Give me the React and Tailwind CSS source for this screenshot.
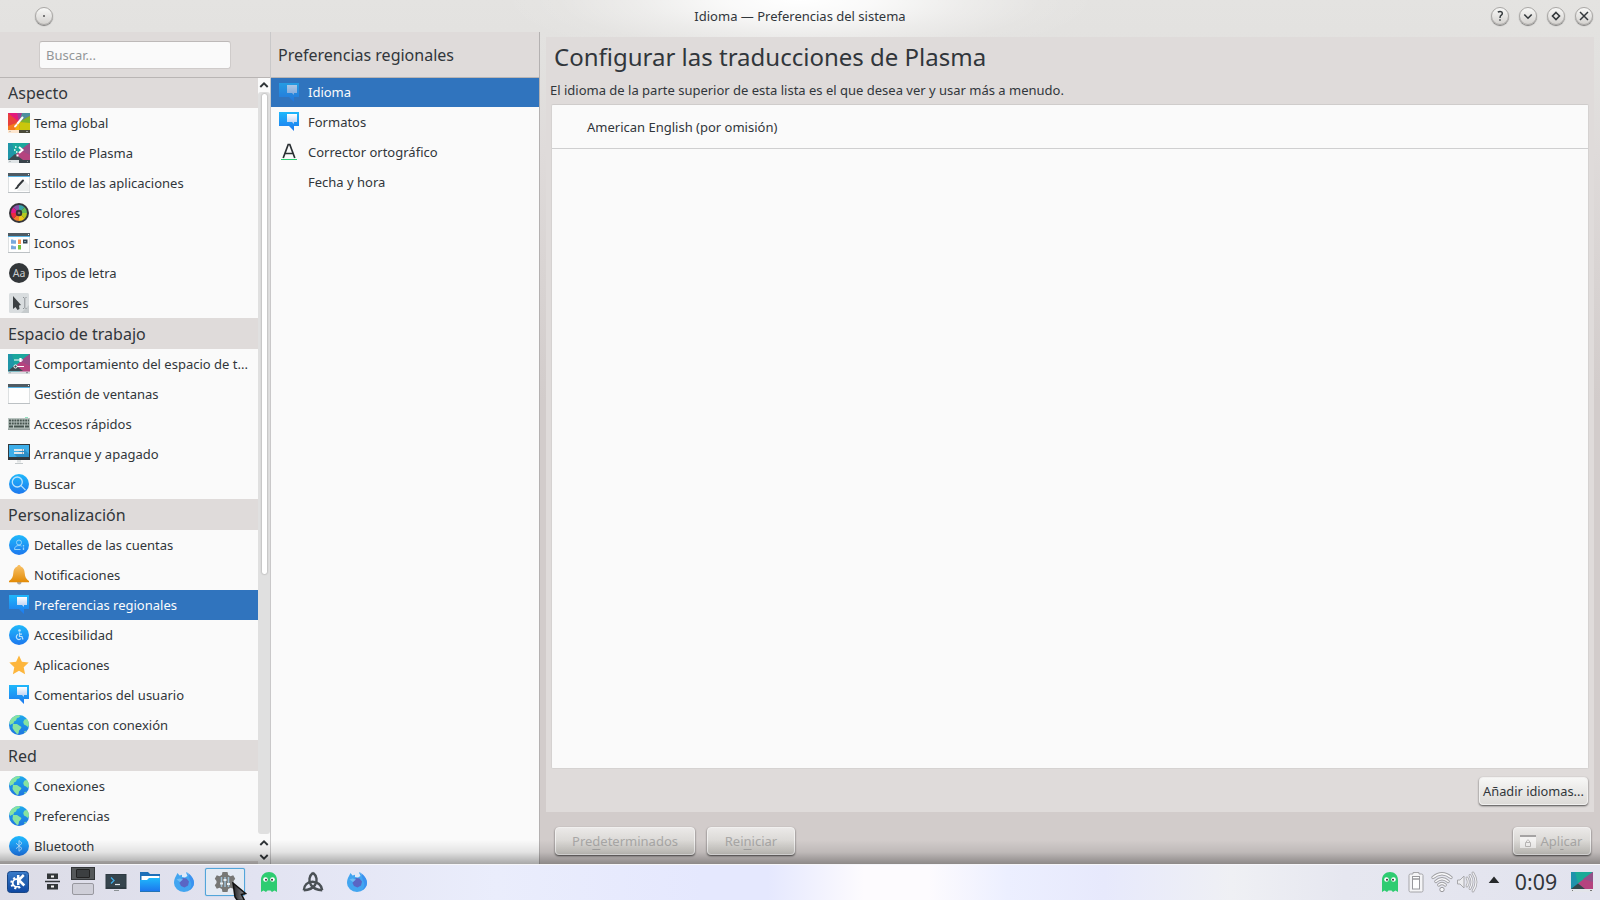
import React from "react";

// Small 22x22 icons
const Svg = ({ children, size = 22, className = "" }) => (
  <svg width={size} height={size} viewBox="0 0 22 22" className={`shrink-0 ${className}`}>
    {children}
  </svg>
);

const ThemeIcon = () => (
  <Svg>
    <rect x="0" y="1" width="22" height="20" fill="#e8413c" />
    <path d="M11 10 0 1h9z" fill="#e4187b" />
    <path d="M11 10 9 1h5z" fill="#a23a9a" />
    <path d="M11 10 14 1h8v3z" fill="#4d8fa0" />
    <path d="M11 10 22 4v8z" fill="#7fb52a" />
    <path d="M11 10 22 11v10H12z" fill="#c9c70c" />
    <path d="M11 10 12 20H5z" fill="#f3b30f" />
    <path d="M11 10 6 19H0v-5z" fill="#f47a1f" />
    <path d="M9.500 11.500 14.500 5.500" stroke="#fff" strokeWidth="2" strokeLinecap="round" />
    <path d="M7 14.500 8.500 13" stroke="#fff" strokeWidth="1.800" strokeLinecap="round" />
    <rect x="0" y="18" width="11" height="3" fill="#fde6cf" />
    <rect x="11" y="18" width="11" height="3" fill="#4a4a3a" />
    <path d="M1.500 19.500h1M18 19.500h2" stroke="#999" />
  </Svg>
);

const PlasmaBase = () => (
  <>
    <rect x="0" y="1" width="22" height="20" fill="#1f96a8" />
    <path d="M4 1h18L7 14z" fill="#1ba79d" />
    <path d="M22 1v20H14L7 13z" fill="#b5437f" />
    <path d="M22 1v12L12 8z" fill="#9a4c86" />
    <path d="M0 18 7 12 15 18z" fill="#3b4a50" />
  </>
);

const PlasmaStyleIcon = () => (
  <Svg>
    <PlasmaBase />
    <path d="M11 5l3.500 3-3.500 3M8.500 13.500h2" stroke="#fff" strokeWidth="2" fill="none" />
    <path d="M7 5h1.500M6 8h1.500M8 10h1.500" stroke="#fff" strokeWidth="1.500" />
    <rect x="0" y="18" width="11" height="3" fill="#dfe4e6" />
    <rect x="11" y="18" width="11" height="3" fill="#39444b" />
    <path d="M1.500 19.500h1M19 19.500h1" stroke="#8a9296" />
  </Svg>
);

const WorkspaceIcon = () => (
  <Svg>
    <PlasmaBase />
    <path d="M6 7h9M7 13.500h9" stroke="#fff" strokeWidth="1.200" />
    <path d="M12.500 5v4" stroke="#fff" strokeWidth="2.200" />
    <circle cx="7.500" cy="13.500" r="1.600" fill="#3b4a50" stroke="#fff" />
    <rect x="0" y="18.500" width="22" height="2.500" fill="#d9dde0" />
    <path d="M1.500 19.700h1M18 19.700h2" stroke="#7c8488" />
  </Svg>
);

const WindowFrame = ({ children }) => (
  <Svg>
    <rect x="0.500" y="3.500" width="21" height="17" fill="#fefefe" stroke="#dde0e1" />
    <path d="M0 20.500h22" stroke="#bcc1c4" />
    <rect x="0" y="1" width="22" height="3" fill="#4e5a62" />
    <rect x="0" y="4" width="22" height="1" fill="#5bb6e6" />
    <rect x="20" y="2" width="1" height="1" fill="#f5f5f5" />
    {children}
  </Svg>
);

const AppStyleIcon = () => (
  <WindowFrame>
    <path d="M9 19 16 8l5 5v6z" fill="#eef0f0" />
    <path d="M10 14 15 8.500" stroke="#34393c" strokeWidth="2" strokeLinecap="round" />
    <path d="M6.500 17.200c1-.4 1-2.700 3-3.200l1.200 1c-.6 1.500-2.200 2.300-4.200 2.200z" fill="#34393c" />
  </WindowFrame>
);

const IconsIcon = () => (
  <WindowFrame>
    <path d="M3 7.500h2l.7.700H8v3.500H3zM3 13.500h2l.7.700H8v3H3z" fill="#77a9dc" />
    <path d="M10 7.500h3V12h-3z" fill="#f79251" />
    <path d="M10 13h3v4.500h-3z" fill="#78c43c" />
    <rect x="15" y="7.500" width="4.500" height="4" fill="#33444f" />
    <path d="M16 9.500h2" stroke="#89b6cc" strokeWidth=".8" />
  </WindowFrame>
);

const WindowIcon = () => <WindowFrame />;

const ColorsIcon = () => (
  <Svg>
    <circle cx="11" cy="11" r="10" fill="#35353a" />
    <g>
      <path d="M11 11V3a8 8 0 0 1 5.660 2.340z" fill="#37a2a8" />
      <path d="M11 11l5.660-5.660A8 8 0 0 1 19 11z" fill="#64bb55" />
      <path d="M11 11h8a8 8 0 0 1-2.340 5.660z" fill="#b4c91f" />
      <path d="M11 11l5.660 5.660A8 8 0 0 1 11 19z" fill="#f0c419" />
      <path d="M11 11v8a8 8 0 0 1-5.660-2.340z" fill="#f3802a" />
      <path d="M11 11l-5.660 5.660A8 8 0 0 1 3 11z" fill="#ee2a40" />
      <path d="M11 11H3a8 8 0 0 1 2.340-5.660z" fill="#e01a88" />
      <path d="M11 11 5.340 5.340A8 8 0 0 1 11 3z" fill="#8253a8" />
    </g>
    <circle cx="11" cy="11" r="3.200" fill="#333337" />
    <circle cx="11" cy="11" r="1.300" fill="#777" />
  </Svg>
);

const FontsIcon = () => (
  <Svg>
    <circle cx="11" cy="11" r="10" fill="#33373a" />
    <text x="11" y="15" textAnchor="middle" fontSize="10.500" fill="#c9cccd" fontFamily="Noto Sans, sans-serif">
      Aa
    </text>
  </Svg>
);

const CursorsIcon = () => (
  <Svg>
    <rect x="1" y="1" width="20" height="20" rx="1.500" fill="#d9dddf" />
    <path d="M13 21 21 13v8z" fill="#c6cbcd" />
    <path d="M5 4v13l2.500-2 2 3 2-1-.5-3.500 2-.5z" fill="#3c4043" />
    <path d="M15 5.500h1.200M17.500 5.500h1M15 16.500h1.200M17.500 16.500h1M16.800 6v10" stroke="#8c9194" />
  </Svg>
);

const KeyboardIcon = () => (
  <Svg>
    <rect x="0" y="5" width="22" height="12" fill="#b9c4c0" />
    <rect x="0" y="15.500" width="22" height="1.500" fill="#96a19e" />
    <path d="M1 7.500h20M1 10.500h20" stroke="#46544f" strokeWidth="2" strokeDasharray="2 .7" />
    <path d="M1 13.500h4M6 13.500h10M17 13.500h4" stroke="#46544f" strokeWidth="2" />
    <path d="M17 4.500h3" stroke="#8fe0bf" />
  </Svg>
);

const BootIcon = () => (
  <Svg>
    <rect x="0" y="1" width="22" height="16" fill="#33393d" />
    <rect x="1" y="2" width="20" height="12" fill="#3daee9" />
    <path d="M6 11 16 6l5 5v3H9z" fill="#2d8fc7" />
    <path d="M6 6h10v2H6zM6 9h10v2H6z" fill="#dfe6ea" />
    <path d="M14 7h1M14 10h1" stroke="#667" />
    <path d="M9 17h4v2.500H9z" fill="#dfe2e3" />
    <path d="M7 20.500h8" stroke="#c4c9cb" />
  </Svg>
);

const Gradients = () => (
  <svg width="0" height="0" className="absolute">
    <defs>
      <linearGradient id="blue" x1="0" y1="0" x2="0" y2="1">
        <stop offset="0" stopColor="#1fb8fb" />
        <stop offset="1" stopColor="#1d78ee" />
      </linearGradient>
      <linearGradient id="gold" x1="0" y1="0" x2="0" y2="1">
        <stop offset="0" stopColor="#f9c36a" />
        <stop offset="1" stopColor="#e28a05" />
      </linearGradient>
      <linearGradient id="paper" x1="0" y1="0" x2="0" y2="1">
        <stop offset="0" stopColor="#fff" />
        <stop offset="1" stopColor="#b5cdf2" />
      </linearGradient>
      <linearGradient id="kblue" x1="0" y1="0" x2="0" y2="1">
        <stop offset="0" stopColor="#3a7cc9" />
        <stop offset="1" stopColor="#0d47a1" />
      </linearGradient>
      <linearGradient id="pointer" x1="0" y1="0" x2="1" y2="0">
        <stop offset="0" stopColor="#222226" />
        <stop offset="1" stopColor="#8d8d92" />
      </linearGradient>
    </defs>
  </svg>
);

const BlueCircle = ({ children }) => (
  <Svg>
    <circle cx="11" cy="11" r="10" fill="url(#blue)" />
    {children}
  </Svg>
);

const SearchIcon = () => (
  <BlueCircle>
    <circle cx="9.300" cy="9" r="5" fill="none" stroke="#b9e2fc" strokeWidth="1.300" />
    <path d="M13 12.600l4.500 4.500" stroke="#b9e2fc" strokeWidth="1.300" />
  </BlueCircle>
);

const AccountIcon = () => (
  <BlueCircle>
    <circle cx="11" cy="8.500" r="2.500" fill="none" stroke="#93d3fb" />
    <path d="M12.500 15.500h-6c0-2.500 1.500-4 4.500-4 1 0 2 .2 2.500.600" fill="none" stroke="#93d3fb" />
    <path d="M15.500 11v1.500M15.500 13.500v2.500" stroke="#93d3fb" strokeWidth="1.300" />
  </BlueCircle>
);

const AccessIcon = () => (
  <BlueCircle>
    <circle cx="11.500" cy="6.500" r="1.300" fill="#b9e2fc" />
    <path d="M11.500 8.500v4h2.500l1 3M11.500 10.200h2.500" fill="none" stroke="#b9e2fc" strokeWidth="1.200" />
    <path d="M10 10.500a2.600 2.600 0 1 0 3 4" fill="none" stroke="#b9e2fc" strokeWidth="1.200" />
  </BlueCircle>
);

const BluetoothIcon = () => (
  <BlueCircle>
    <path d="M8 8.200l6 5.300-3 2.800V5.500l3 2.800-6 5.400" fill="none" stroke="#a9d8fb" strokeWidth="1" />
  </BlueCircle>
);

const BellIcon = () => (
  <Svg>
    <path d="M9 18h4.500c0 1.700-1 2.500-2.200 2.500S9 19.700 9 18z" fill="#a7a7a7" />
    <path
      d="M11 1c-.9 0-1.600.6-1.800 1.500C6.500 3.500 5.500 6 5.300 9 5 13 4 15 1 17v1.200h20V17c-3-2-4-4-4.300-8-.2-3-1.200-5.500-3.900-6.500C12.600 1.600 11.900 1 11 1z"
      fill="url(#gold)"
    />
  </Svg>
);

const LocaleIcon = ({ dim }) => (
  <Svg className={dim ? "opacity-60" : ""}>
    <path d="M1 1h20v14h-5v5l-5-5H1z" fill="url(#blue)" />
    <path d="M9 3h10v8h-3v2l-2-2H9z" fill="url(#paper)" />
  </Svg>
);

const StarIcon = () => (
  <Svg>
    <path
      d="M11 1.500l2.900 6.300 6.800.8-5 4.700 1.400 6.900-6.100-3.500-6.100 3.500 1.400-6.900-5-4.700 6.800-.8z"
      fill="#fdb63d"
    />
  </Svg>
);

const GlobeIcon = () => (
  <Svg>
    <circle cx="11" cy="11" r="10" fill="url(#blue)" />
    <circle cx="11" cy="11" r="10" fill="#1f6fae" opacity=".2" />
    <path d="M1.500 8C3 4 6 1.500 10.500 1l2 .7-1.500 1.800-2 .5-1 2.500-2 1-.5 2-2 .5L2 11z" fill="#88e3a0" />
    <path d="M5 10l4 0 4.500 3-1 2-1.500 1.500-.5 3-1.500.5-3-3.500-1.500-2.500z" fill="#88e3a0" />
    <path d="M16.500 5.500l2.500-.5c1.300 1.600 2 3.500 2 6l-1 2-2-1.500-2-1-.8-2.500z" fill="#88e3a0" />
    <path d="M16 17.500l2.500-1-1.500 2.500z" fill="#88e3a0" />
  </Svg>
);

const SpellIcon = () => (
  <Svg>
    <path d="M5.200 17 10.200 3.500h1.600L16.800 17M7 12.500h8" fill="none" stroke="#2b3033" strokeWidth="1.700" />
    <path d="M3 18.500h16" stroke="#2ecc71" />
  </Svg>
);

// Taskbar icons
const KdeIcon = () => (
  <Svg>
    <rect x=".5" y=".5" width="21" height="21" rx="3" fill="url(#kblue)" stroke="#1a4684" />
    <circle cx="9.500" cy="12" r="5.200" fill="none" stroke="#fff" strokeWidth="2" strokeDasharray="2 2.080" />
    <circle cx="9.500" cy="12" r="3.800" fill="none" stroke="#fff" strokeWidth="1.800" />
    <path d="M9.500 3H19v12h-8z" fill="#2462b1" />
    <path d="M11.200 4v10M16.800 4l-5 5 5.500 5.500" fill="none" stroke="#fff" strokeWidth="2.500" />
  </Svg>
);

const DesktopsIcon = () => (
  <Svg>
    <path d="M6 2.500h11v5.500H6zM6 13h11v5.500H6z" fill="#333739" />
    <path d="M10 5.500h3M10 15.500h3" stroke="#f5f5f5" strokeWidth="2" />
    <path d="M4 10.500h15" stroke="#333739" strokeWidth="1.500" />
  </Svg>
);

const TerminalIcon = () => (
  <Svg>
    <rect x="0.500" y="3" width="21" height="15" fill="#2e3a42" />
    <rect x="1.500" y="4" width="19" height="12" fill="#35444d" />
    <path d="M6 6.500l3 3-3 3" fill="none" stroke="#3daee9" strokeWidth="1.300" />
    <path d="M10 13.500h5" stroke="#dfe6ea" strokeWidth="1.200" />
    <path d="M9 19.500h5" stroke="#8c9295" />
  </Svg>
);

const FolderIcon = () => (
  <Svg>
    <path d="M1 1h8l2 2h10v8H1z" fill="#1d6fb8" />
    <path d="M2.500 5h18v6h-18z" fill="#fff" />
    <path d="M1 9h7l2-2h11v13H1z" fill="url(#blue)" />
    <path d="M1 20.500h20" stroke="#2474b6" />
  </Svg>
);

const FirefoxIcon = () => (
  <Svg>
    <path
      d="M3 5l1.500-3 2 2.500 2-.5c1-.6 1.500-1 3.500-1.200L14 1l1.500 2.800C18 5 21 8 21 12a10 9 0 0 1-20 0c0-3 .8-5 2-7z"
      fill="#42a5f0"
    />
    <path d="M15 2c3.500 2.500 6 6 6 10 0 3-2 6-5 7.500 3-4 3-7 1-10z" fill="#3b92f0" />
    <path d="M8.500 8l2-1 3 .5 2.500 3-1 4-3.500 2-3.500-1.500L6.500 12z" fill="#5a66c4" />
    <path d="M3.500 8.500l3-1 3.500 1-3 2.500z" fill="#6fbdf5" />
    <path d="M9 3l4-1.500 1.500 3.500-2.500 1.500-3-.5z" fill="#dfe9f8" />
  </Svg>
);

const GearIcon = () => (
  <Svg>
    <path
      d="M8.500 1h5l.7 3 2.300 1.200 2.700-1 2 3.500-1.700 2.300v2l1.700 2.300-2 3.500-2.700-1-2.300 1.200-.7 3h-5l-.7-3-2.300-1.200-2.700 1-2-3.500L2.500 12v-2L.8 7.700l2-3.500 2.700 1L7.800 4z"
      fill="#777775"
    />
    <path d="M7.500 6v10M11 6v10M14.500 6v10" stroke="#9fbfd3" strokeWidth="1.500" />
    <path d="M6 12.500h3M9.500 9h3M13 13h3" stroke="#e8eef2" strokeWidth="1.800" />
  </Svg>
);

const GhostIcon = () => (
  <Svg>
    <path d="M3 21V9c0-5 3.500-8 8-8s8 3 8 8v12l-2.500-1.500L14 21l-1.500-1.500h-3L8 21l-2.500-1.500z" fill="#2ecc71" />
    <circle cx="7.500" cy="8.500" r="2.300" fill="#fff" />
    <circle cx="14.500" cy="8.500" r="2.300" fill="#fff" />
    <circle cx="8" cy="8.800" r="1" fill="#333" />
    <circle cx="14" cy="8.800" r="1" fill="#333" />
  </Svg>
);

const TriquetraIcon = () => (
  <Svg>
    <g fill="none" stroke="#4a5055" strokeWidth="2.400" strokeLinejoin="round">
      <path d="M11 1.800C7 5 6.300 10 9 14c2 3 6 5 11.200 5.200" />
      <path d="M11 1.800c4 3.200 4.700 8.200 2 12.200-2 3-6 5-11.200 5.200" />
      <path d="M1.800 19.200C2 14 5.500 10.800 10.500 10.700c5 0 9.200 3.300 9.700 8.500" />
    </g>
  </Svg>
);

const BatteryIcon = () => (
  <Svg>
    <path
      d="M8 3V1.500h6V3h2.500q1.500 0 1.500 1.500v15q0 1.500-1.500 1.500h-11Q4 21 4 19.500v-15Q4 3 5.500 3z"
      fill="#f4f4f6"
      stroke="#a4a4a8"
    />
    <rect x="7.500" y="5.500" width="7" height="12.500" fill="#fff" stroke="#98989c" />
    <path d="M8 8h6" stroke="#98989c" strokeWidth="1.500" />
  </Svg>
);

const WifiIcon = () => (
  <Svg>
    {["#a0a0a4", "#f8f8fa"].map((color, i) => (
      <g key={color} fill="none" stroke={color} strokeWidth={i ? 1.500 : 3.200} strokeLinecap="round">
        <path d="M2 6.500q9-7.500 18 0" />
        <path d="M4.800 10.500q6.200-5.500 12.400 0" />
        <path d="M7.700 14q3.300-3 6.600 0" />
      </g>
    ))}
    <circle cx="11" cy="18.500" r="2.200" fill="#f8f8fa" stroke="#98989c" />
  </Svg>
);

const VolumeIcon = () => (
  <Svg>
    <path d="M1.500 9H4l4-4v12l-4-4H1.500z" fill="#ededf0" stroke="#a8a8ac" />
    {["#a8a8ac", "#f3f3f6"].map((color, i) => (
      <g key={color} fill="none" stroke={color} strokeWidth={i ? 1.200 : 2.800} strokeLinecap="round">
        <path d="M11 7q2.500 4 0 8" />
        <path d="M14 4.500q4 6.500 0 13" />
        <path d="M17 2q6 9 0 18" />
      </g>
    ))}
  </Svg>
);

const WallpaperIcon = () => (
  <Svg>
    <rect x="0" y="1" width="22" height="20" fill="#1f93ac" />
    <path d="M4 1h18L7 13z" fill="#1bab97" />
    <path d="M22 1v18h-8L7 12.500z" fill="#b5437f" />
    <path d="M22 1v10L12 8z" fill="#94518a" />
    <path d="M0 18 7 12.500 14 18z" fill="#34464b" />
    <rect x="0" y="18" width="22" height="3" fill="#e3e5ea" />
    <path d="M1 19.500h1M19 19.500h2" stroke="#777" />
  </Svg>
);

const sections = [
  {
    title: "Aspecto",
    items: [
      { label: "Tema global", icon: ThemeIcon },
      { label: "Estilo de Plasma", icon: PlasmaStyleIcon },
      { label: "Estilo de las aplicaciones", icon: AppStyleIcon },
      { label: "Colores", icon: ColorsIcon },
      { label: "Iconos", icon: IconsIcon },
      { label: "Tipos de letra", icon: FontsIcon },
      { label: "Cursores", icon: CursorsIcon },
    ],
  },
  {
    title: "Espacio de trabajo",
    items: [
      { label: "Comportamiento del espacio de t...", icon: WorkspaceIcon },
      { label: "Gestión de ventanas", icon: WindowIcon },
      { label: "Accesos rápidos", icon: KeyboardIcon },
      { label: "Arranque y apagado", icon: BootIcon },
      { label: "Buscar", icon: SearchIcon },
    ],
  },
  {
    title: "Personalización",
    items: [
      { label: "Detalles de las cuentas", icon: AccountIcon },
      { label: "Notificaciones", icon: BellIcon },
      { label: "Preferencias regionales", icon: LocaleIcon, active: true },
      { label: "Accesibilidad", icon: AccessIcon },
      { label: "Aplicaciones", icon: StarIcon },
      { label: "Comentarios del usuario", icon: LocaleIcon },
      { label: "Cuentas con conexión", icon: GlobeIcon },
    ],
  },
  {
    title: "Red",
    items: [
      { label: "Conexiones", icon: GlobeIcon },
      { label: "Preferencias", icon: GlobeIcon },
      { label: "Bluetooth", icon: BluetoothIcon },
    ],
  },
];

const Chevron = ({ down }) => (
  <svg width="10" height="8" viewBox="0 0 10 8" className={down ? "rotate-180" : ""}>
    <path d="M1.300 6 5 2.300 8.700 6" fill="none" stroke="#2f3437" strokeWidth="1.900" />
  </svg>
);

const RoundButton = ({ children }) => (
  <div className="flex h-[18px] w-[18px] items-center justify-center rounded-full border border-[#a9a7a5] bg-gradient-to-b from-[#f8f8f7] to-[#d5d3d0] shadow-[0_1px_1px_rgba(0,0,0,0.45)]">
    {children}
  </div>
);

const TitleBar = () => (
  <div className="relative flex h-8 shrink-0 items-center px-[7px]">
    <div className="ml-7">
      <RoundButton>
        <span className="h-[2px] w-[2px] bg-[#777]" />
      </RoundButton>
    </div>
    <h1 className="flex-1 pl-[56px] pt-px text-center">Idioma — Preferencias del sistema</h1>
    <div className="flex gap-[10px]">
      <RoundButton>
        <svg width="12" height="12" viewBox="0 0 12 12" fill="none" stroke="#33383b" strokeWidth="1.400">
          <path d="M3.800 2.200Q6 .8 7.800 2q1.200 1.700-.5 3.200Q6 6 6 8M6 9.300v1.400" />
        </svg>
      </RoundButton>
      <RoundButton>
        <svg width="12" height="12" viewBox="0 0 12 12" fill="none" stroke="#33383b" strokeWidth="1.600">
          <path d="M2.300 4.500 6 8.200l3.700-3.700" />
        </svg>
      </RoundButton>
      <RoundButton>
        <svg width="12" height="12" viewBox="0 0 12 12" fill="none" stroke="#33383b" strokeWidth="1.600">
          <path d="M6 2.500 9.500 6 6 9.500 2.500 6z" />
        </svg>
      </RoundButton>
      <RoundButton>
        <svg width="12" height="12" viewBox="0 0 12 12" fill="none" stroke="#33383b" strokeWidth="1.500">
          <path d="M2 2l8 8M10 2l-8 8" />
        </svg>
      </RoundButton>
    </div>
  </div>
);

const Sidebar = () => (
  <div className="flex w-[271px] shrink-0 flex-col border-r border-[#c9c8c9] bg-[#dfdbda]">
    <div className="h-[46px] shrink-0 border-b border-[#b9b5b4] pl-[39px] pt-[9px]">
      <input
        type="text"
        placeholder="Buscar..."
        className="h-7 w-48 rounded-[3px] border border-[#cfcbca] border-t-[#bdb9b8] bg-[#fafafa] px-1.5 placeholder:text-[#939698]"
      />
    </div>
    <div className="flex min-h-0 flex-1">
      <div className="mb-[3px] w-[258px] shrink-0 overflow-hidden bg-[#fafafa]">
        {sections.map((section, i) => (
          <div key={section.title}>
            <div
              className={`flex items-center bg-[#dfdbda] pl-2 text-base leading-none ${
                i === 0 ? "h-[30px]" : "h-[31px] pt-px"
              }`}
            >
              {section.title}
            </div>
            {section.items.map(({ label, icon: Icon, active }) => (
              <div
                key={label}
                className={`flex h-[30px] items-center gap-1 pl-2 ${active ? "bg-[#3074be] text-[#fcfcfc]" : ""}`}
              >
                <Icon />
                <span className="whitespace-nowrap pt-px">{label}</span>
              </div>
            ))}
          </div>
        ))}
      </div>
      {/* Scrollbar */}
      <div className="flex w-3 flex-col items-center bg-[#fafafa]">
        <div className="flex h-[14px] shrink-0 items-center pb-px">
          <Chevron />
        </div>
        <div className="w-full flex-1 rounded-[3px] bg-[#e0e0e0] pt-[2px]">
          <div className="mx-auto h-[480px] w-[5px] rounded-[2px] bg-white shadow-[0_0_2px_rgba(0,0,0,0.4)]" />
        </div>
        <div className="flex h-[30px] shrink-0 flex-col items-center gap-[6px] pt-[5px]">
          <Chevron />
          <Chevron down />
        </div>
      </div>
    </div>
  </div>
);

const subItems = [
  { label: "Idioma", icon: LocaleIcon, active: true },
  { label: "Formatos", icon: LocaleIcon },
  { label: "Corrector ortográfico", icon: SpellIcon },
  { label: "Fecha y hora" },
];

const SubCategories = () => (
  <div className="flex w-[269px] shrink-0 flex-col border-r border-[#b4b1b1] bg-[#fafafa]">
    <div className="flex h-[46px] shrink-0 items-center border-b border-[#b9b5b4] bg-[#dfdbda] pl-[7px] text-base leading-none">
      Preferencias regionales
    </div>
    {subItems.map(({ label, icon: Icon, active }, i) => (
      <div
        key={label}
        className={`flex items-center pl-[7px] ${i === 0 ? "h-[29px]" : "h-[30px]"} ${
          active ? "bg-[#3074be] text-[#fcfcfc]" : ""
        }`}
      >
        <div className="mr-2 w-[22px]">{Icon && <Icon dim={active} />}</div>
        <span className={i === 0 ? "" : "pt-px"}>{label}</span>
      </div>
    ))}
  </div>
);

const Button = ({ className, children }) => (
  <button
    className={`flex h-7 items-center justify-center rounded-[4px] border border-[#f1f0ef] bg-gradient-to-b pt-px shadow-[0_1px_2px_rgba(0,0,0,0.65)] ${className}`}
  >
    {children}
  </button>
);

const Content = () => (
  <div className="flex min-w-0 flex-1 flex-col pl-1.5 pr-1.5 pt-[5px]">
    <div className="flex h-[775px] shrink-0 flex-col bg-[#dfdbda] pl-1 pr-[5px]">
      <h2 className="ml-1 flex h-10 items-center text-[24px]">Configurar las traducciones de Plasma</h2>
      <p className="flex h-[27px] items-center pb-px">
        El idioma de la parte superior de esta lista es el que desea ver y usar más a menudo.
      </p>
      <div className="ml-px h-[665px] rounded-[2px] border border-[#d5d2d1] border-t-[#cfcccb] bg-[#fafafa]">
        <div className="flex h-11 items-center border-b border-[#cfcfd0] pl-[35px] pt-0.5">
          American English (por omisión)
        </div>
      </div>
      <div className="mr-px mt-2 flex justify-end">
        <Button className="w-[109px] shrink-0 whitespace-nowrap from-[#f7f7f6] to-[#dddbd8] text-[12.800px]">
          Añadir idiomas...
        </Button>
      </div>
    </div>
    <div className="mt-[15px] flex gap-3 pl-[9px] pr-[3px] text-[#a9a8a7]">
      <Button className="w-[140px] from-[#ebe9e8] to-[#cbc9c4]">
        Pre<u className="underline-offset-[3px]">d</u>eterminados
      </Button>
      <Button className="w-[88px] from-[#ebe9e8] to-[#cbc9c4]">
        Rei<u className="underline-offset-[3px]">n</u>iciar
      </Button>
      <Button className="ml-auto w-[78px] gap-[5px] from-[#ebe9e8] to-[#cbc9c4] pr-0.5">
        <svg width="16" height="16" viewBox="0 0 16 16">
          <rect x="0" y="1" width="16" height="13" fill="#f3f2f1" />
          <rect x="0" y="1" width="16" height="2" fill="#a5a3a3" />
          <path d="M5.500 8.500h5v4h-5zM6.500 8.500V7q1.500-2.500 3 0v1.500" fill="none" stroke="#bbb9b8" />
        </svg>
        <span>
          Apl<u className="underline-offset-[3px]">i</u>car
        </span>
      </Button>
    </div>
  </div>
);

const Slot = ({ className, children }) => (
  <div className={`flex h-full shrink-0 items-center justify-center ${className}`}>{children}</div>
);

const Taskbar = () => (
  <div className="relative flex h-9 shrink-0 items-center border-t border-[#f6f6fa] bg-[linear-gradient(90deg,#dcdce6_0%,#e2e3f1_16%,#eaedfc_31%,#e5e8fe_44%,#e5e8fe_48%,#fdfbfe_54%,#fdfbfe_58%,#ecefff_63%,#e7e9fc_69%,#eff0f4_77%,#e6e7f0_84%,#e2e3ee_100%)] pb-px">
    <Slot className="w-9"><KdeIcon /></Slot>
    <Slot className="w-8"><DesktopsIcon /></Slot>
    <Slot className="w-[30px] flex-col gap-[3px] pb-[3px]">
      <div className="flex h-[13px] w-6 items-center justify-center border border-[#333638] bg-[#55585a]">
        <div className="h-[9px] w-[14px] rounded-[1px] border border-[#222] bg-[#3c3f41]" />
      </div>
      <div className="h-3 w-[22px] rounded-[2px] border border-[#98989f] bg-[#cfcfd8]" />
    </Slot>
    <Slot className="w-[36px]"><TerminalIcon /></Slot>
    <Slot className="w-[31px]"><FolderIcon /></Slot>
    <Slot className="w-[38px]"><FirefoxIcon /></Slot>
    <Slot className="w-[43px]">
      <div className="flex h-[28px] w-10 items-center justify-center rounded-[2px] border border-[#52a5da] bg-[#e4eaf3] shadow-[0_0_1px_#52a5da]">
        <GearIcon />
      </div>
    </Slot>
    <Slot className="w-[45px]"><GhostIcon /></Slot>
    <Slot className="w-[43px]"><TriquetraIcon /></Slot>
    <Slot className="w-[45px]"><FirefoxIcon /></Slot>
    <div className="flex-1" />
    <Slot className="w-[25px]"><GhostIcon /></Slot>
    <Slot className="w-[27px]"><BatteryIcon /></Slot>
    <Slot className="w-[25px]"><WifiIcon /></Slot>
    <Slot className="w-[26px]"><VolumeIcon /></Slot>
    <Slot className="w-[27px] pb-1">
      <svg width="12" height="8" viewBox="0 0 12 8">
        <path d="M6 .5 11.300 7H.7z" fill="#26292b" />
      </svg>
    </Slot>
    <Slot className="w-[57px] pl-px text-[21.300px]">0:09</Slot>
    <Slot className="w-9"><WallpaperIcon /></Slot>
    {/* Mouse pointer */}
    <svg width="15" height="18" viewBox="0 0 15 18" className="absolute left-[232px] top-[17px]">
      <path d="M1 1l12.500 10.500-4 1 3 6H5.500L3 15z" fill="url(#pointer)" stroke="#111" strokeWidth="1.500" />
    </svg>
  </div>
);

export default function App() {
  return (
    <div className="flex h-[900px] w-[1600px] flex-col overflow-hidden font-['Noto_Sans',sans-serif] text-[13px] leading-none text-[#31363b]">
      <Gradients />
      <div className="relative flex h-[864px] shrink-0 flex-col bg-[radial-gradient(300px_64px_at_800px_0px,#ffffff_0%,rgba(255,255,255,0.8)_25%,rgba(255,255,255,0.35)_55%,rgba(255,255,255,0.08)_80%,rgba(255,255,255,0)_100%),linear-gradient(180deg,#e4e3e1_0px,#e2e1df_60px,#dfdbda_150px,#d2cccb_400px,#d2cccb_100%)]">
        <TitleBar />
        <div className="flex min-h-0 flex-1">
          <Sidebar />
          <SubCategories />
          <Content />
        </div>
        <div className="pointer-events-none absolute inset-x-0 bottom-0 h-6 bg-[linear-gradient(180deg,rgba(0,0,0,0)_0%,rgba(0,0,0,0.09)_50%,rgba(0,0,0,0.33)_100%)]" />
      </div>
      <Taskbar />
    </div>
  );
}
